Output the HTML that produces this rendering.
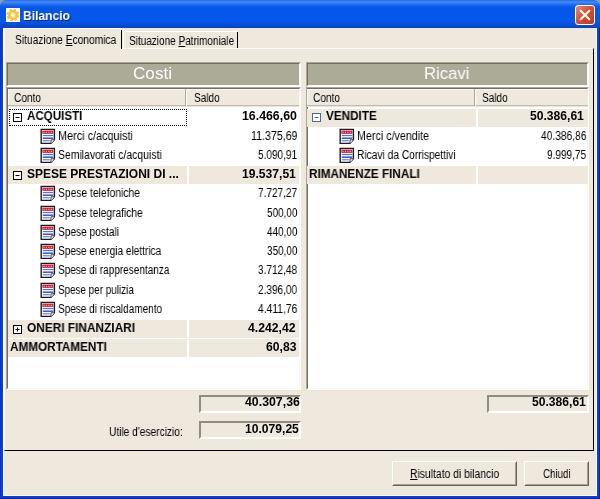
<!DOCTYPE html>
<html><head><meta charset="utf-8"><title>Bilancio</title>
<style>
html,body{margin:0;padding:0;}
body{width:600px;height:499px;overflow:hidden;position:relative;background:#eee8dd;font-family:"Liberation Sans",sans-serif;font-size:12px;color:#000;}
div,svg{position:absolute;box-sizing:border-box;}
i{display:block;}
.ic{position:absolute;}
#corner{left:0;top:0;width:600px;height:10px;background:#9a9a9a;}
#frame{left:0;top:8px;width:600px;height:491px;background:#0a40d8;border:1px solid;border-color:#0a40d8 #0626a4 #0620a0 #0a34c4;}
#tb{left:0;top:0;width:600px;height:28px;background:linear-gradient(to bottom,#2a68dc 0px,#3f8ffb 2px,#2672f2 4px,#0c5cec 6.5px,#0556e8 9px,#0558ea 21px,#0650de 24px,#0642c4 28px);border-radius:6px 6px 0 0;}
#client{left:3px;top:28px;width:594px;height:468px;background:#eee8dd;border:1px solid #fff;border-top:none;}
#ico{left:6px;top:8px;width:14px;height:14px;background:#fff;}
#close{left:575px;top:5px;width:20px;height:20px;border:1px solid #fff;border-radius:3px;background:linear-gradient(135deg,#e98d73 0%,#d8502f 45%,#c03a1c 100%);}
.t{white-space:nowrap;line-height:14px;transform-origin:0 0;will-change:transform;}
.focus{border:1px dotted #000;}
.sunk{border:1px solid;border-color:#aca899 #fff #fff #aca899;}
.sunk>i{position:absolute;left:0;top:0;right:0;bottom:0;border:1px solid;border-color:#716f64 #fbfaf6 #fbfaf6 #716f64;}
.sunk2{border:2px solid;border-color:#8f8d82 #fff #fff #8f8d82;}
.hdr{background:#acab98;}
.btn{background:#eee8dd;border:1px solid;border-color:#fff #69655c #69655c #fff;}
.btn>i{position:absolute;left:0;top:0;right:0;bottom:0;border:1px solid;border-color:#eee8dd #a39e90 #a39e90 #eee8dd;}
u{text-decoration:underline;}
</style></head><body>

<div id="corner"></div>
<div id="frame"></div>
<div id="client"></div>
<div id="tb"></div>
<div id="ico"><svg style="left:0;top:0" width="14" height="14" viewBox="0 0 14 14"><circle cx="7" cy="7" r="4.9" fill="#f0c43a"/><circle cx="7" cy="7" r="5.6" fill="none" stroke="#f0c43a" stroke-width="1.6" stroke-dasharray="2.6 1.8"/><circle cx="7" cy="7" r="3.2" fill="#f7d765"/><circle cx="7" cy="7" r="1.7" fill="#fffbe6"/></svg></div>
<div class="t" style="left:23.40px;top:8.80px;font-size:13px;transform:scaleX(0.9300);font-weight:bold;color:#fff;text-shadow:1px 1px 0 #0a246a;">Bilancio</div>
<div id="close"><svg style="left:0;top:0" width="18" height="18" viewBox="0 0 18 18"><path d="M4.7 4.7L13.3 13.3M13.3 4.7L4.7 13.3" stroke="#fff" stroke-width="2" stroke-linecap="round"/></svg></div>

<!-- tab control -->
<div style="left:4px;top:48px;width:589.5px;height:403px;border:1px solid;border-color:#fff #000 #000 #fff;"></div>
<div style="left:4px;top:28px;width:118px;height:22px;background:#eee8dd;border-left:1px solid #fff;border-top:1px solid #fff;"></div>
<div style="left:121px;top:30px;width:1px;height:19px;background:#000;"></div>
<div class="t" style="left:14.50px;top:33.00px;font-size:12px;transform:scaleX(0.8529);">Situazione <u>E</u>conomica</div>
<div style="left:123px;top:31px;width:115px;height:17px;border-left:1px solid #fff;border-top:1px solid #fff;"></div>
<div style="left:237px;top:32px;width:1px;height:16px;background:#000;"></div>
<div class="t" style="left:129.00px;top:33.60px;font-size:12px;transform:scaleX(0.8333);">Situazione <u>P</u>atrimoniale</div>

<!-- header panels -->
<div class="sunk hdr" style="left:6px;top:62px;width:295px;height:25px;"><i></i></div>
<div class="sunk hdr" style="left:306px;top:62px;width:283px;height:25px;"><i></i></div>
<div class="t" style="left:133.20px;top:67.00px;font-size:17px;transform:scaleX(1.0079);color:#fff;">Costi</div>
<div class="t" style="left:423.82px;top:67.00px;font-size:17px;transform:scaleX(0.9822);color:#fff;">Ricavi</div>

<!-- trees -->
<div class="sunk" style="left:6px;top:87px;width:295px;height:303px;background:#fff;"><i></i></div>
<div class="sunk" style="left:305.5px;top:87px;width:283.5px;height:303px;background:#fff;"><i></i></div>
<!-- column headers -->
<div style="left:8px;top:89px;width:291px;height:16px;background:#eee8dd;border-top:1px solid #faf8f3;border-left:1px solid #faf8f3;"></div><div style="left:8px;top:105px;width:291px;height:1px;background:#c0bbad;"></div><div style="left:8px;top:106px;width:291px;height:1px;background:#e6e5e0;"></div>
<div style="left:185px;top:89px;width:2px;height:17.3px;border-left:1px solid #aca899;border-right:1px solid #fff;"></div>
<div class="t" style="left:14.00px;top:90.80px;font-size:12px;transform:scaleX(0.8438);">Conto</div>
<div class="t" style="left:193.60px;top:90.80px;font-size:12px;transform:scaleX(0.8387);">Saldo</div>
<div style="left:307px;top:89px;width:280.6px;height:16px;background:#eee8dd;border-top:1px solid #faf8f3;border-left:1px solid #faf8f3;"></div><div style="left:307px;top:105px;width:280.6px;height:1px;background:#c0bbad;"></div><div style="left:307px;top:106px;width:280.6px;height:1px;background:#e6e5e0;"></div>
<div style="left:474px;top:89px;width:2px;height:17.3px;border-left:1px solid #aca899;border-right:1px solid #fff;"></div>
<div class="t" style="left:312.60px;top:90.80px;font-size:12px;transform:scaleX(0.8438);">Conto</div>
<div class="t" style="left:482.40px;top:90.80px;font-size:12px;transform:scaleX(0.8387);">Saldo</div>

<svg class="ic" style="left:13.20px;top:113.45px" width="9" height="9" viewBox="0 0 9 9">
<rect x="0.5" y="0.5" width="8" height="8" fill="#fff" stroke="#000" stroke-width="1"/>
<path d="M2.5 4.5h4" stroke="#000" stroke-width="1"/></svg>
<div class="t" style="left:27.20px;top:109.25px;font-size:12px;transform:scaleX(0.9649);font-weight:bold;">ACQUISTI</div>
<div class="t" style="left:241.72px;top:109.25px;font-size:12px;transform:scaleX(1.0279);font-weight:bold;">16.466,60</div>
<div class="focus" style="left:8.5px;top:109.05px;width:178.5px;height:17.3px"></div>
<svg class="ic" style="left:40.30px;top:127.77px" width="16" height="17" viewBox="0 0 16 17">
<path d="M1.2 1.4 H14.4 V11.8 L11 15.4 H1.2 Z" fill="#fff" stroke="#1c1c1c" stroke-width="1.4"/>
<path d="M11 15.4 V11.8 H14.4" fill="#fff" stroke="#333" stroke-width="0.9"/>
<rect x="2.4" y="2.6" width="10.8" height="3.2" fill="#c8102e"/>
<path d="M3.4 4.2h1.3M5.8 4.2h1.3M8.2 4.2h1.3M10.6 4.2h1.6" stroke="#f6d4da" stroke-width="1.1"/>
<path d="M2.8 7.6h10.4M2.8 12.8h7" stroke="#4660ea" stroke-width="1"/><path d="M2.8 10.2h10.4" stroke="#3552e6" stroke-width="1.5"/>
</svg>
<div class="t" style="left:57.50px;top:128.77px;font-size:12px;transform:scaleX(0.9049);">Merci c/acquisti</div>
<div class="t" style="left:251.39px;top:128.77px;font-size:12px;transform:scaleX(0.8849);">11.375,69</div>
<svg class="ic" style="left:40.30px;top:146.99px" width="16" height="17" viewBox="0 0 16 17">
<path d="M1.2 1.4 H14.4 V11.8 L11 15.4 H1.2 Z" fill="#fff" stroke="#1c1c1c" stroke-width="1.4"/>
<path d="M11 15.4 V11.8 H14.4" fill="#fff" stroke="#333" stroke-width="0.9"/>
<rect x="2.4" y="2.6" width="10.8" height="3.2" fill="#c8102e"/>
<path d="M3.4 4.2h1.3M5.8 4.2h1.3M8.2 4.2h1.3M10.6 4.2h1.6" stroke="#f6d4da" stroke-width="1.1"/>
<path d="M2.8 7.6h10.4M2.8 12.8h7" stroke="#4660ea" stroke-width="1"/><path d="M2.8 10.2h10.4" stroke="#3552e6" stroke-width="1.5"/>
</svg>
<div class="t" style="left:58.40px;top:147.99px;font-size:12px;transform:scaleX(0.8689);">Semilavorati c/acquisti</div>
<div class="t" style="left:258.04px;top:147.99px;font-size:12px;transform:scaleX(0.8375);">5.090,91</div>
<div style="left:8px;top:166.41px;width:179.0px;height:18.0px;background:#eee8dd"></div>
<div style="left:188.5px;top:166.41px;width:110.39999999999998px;height:18.0px;background:#eee8dd"></div>
<svg class="ic" style="left:13.20px;top:171.11px" width="9" height="9" viewBox="0 0 9 9">
<rect x="0.5" y="0.5" width="8" height="8" fill="#fff" stroke="#000" stroke-width="1"/>
<path d="M2.5 4.5h4" stroke="#000" stroke-width="1"/></svg>
<div class="t" style="left:27.20px;top:166.91px;font-size:12px;transform:scaleX(1.0000);font-weight:bold;">SPESE PRESTAZIONI DI ...</div>
<div class="t" style="left:241.72px;top:166.91px;font-size:12px;transform:scaleX(1.0088);font-weight:bold;">19.537,51</div>
<svg class="ic" style="left:40.30px;top:185.43px" width="16" height="17" viewBox="0 0 16 17">
<path d="M1.2 1.4 H14.4 V11.8 L11 15.4 H1.2 Z" fill="#fff" stroke="#1c1c1c" stroke-width="1.4"/>
<path d="M11 15.4 V11.8 H14.4" fill="#fff" stroke="#333" stroke-width="0.9"/>
<rect x="2.4" y="2.6" width="10.8" height="3.2" fill="#c8102e"/>
<path d="M3.4 4.2h1.3M5.8 4.2h1.3M8.2 4.2h1.3M10.6 4.2h1.6" stroke="#f6d4da" stroke-width="1.1"/>
<path d="M2.8 7.6h10.4M2.8 12.8h7" stroke="#4660ea" stroke-width="1"/><path d="M2.8 10.2h10.4" stroke="#3552e6" stroke-width="1.5"/>
</svg>
<div class="t" style="left:58.40px;top:186.43px;font-size:12px;transform:scaleX(0.8589);">Spese telefoniche</div>
<div class="t" style="left:258.04px;top:186.43px;font-size:12px;transform:scaleX(0.8375);">7.727,27</div>
<svg class="ic" style="left:40.30px;top:204.65px" width="16" height="17" viewBox="0 0 16 17">
<path d="M1.2 1.4 H14.4 V11.8 L11 15.4 H1.2 Z" fill="#fff" stroke="#1c1c1c" stroke-width="1.4"/>
<path d="M11 15.4 V11.8 H14.4" fill="#fff" stroke="#333" stroke-width="0.9"/>
<rect x="2.4" y="2.6" width="10.8" height="3.2" fill="#c8102e"/>
<path d="M3.4 4.2h1.3M5.8 4.2h1.3M8.2 4.2h1.3M10.6 4.2h1.6" stroke="#f6d4da" stroke-width="1.1"/>
<path d="M2.8 7.6h10.4M2.8 12.8h7" stroke="#4660ea" stroke-width="1"/><path d="M2.8 10.2h10.4" stroke="#3552e6" stroke-width="1.5"/>
</svg>
<div class="t" style="left:58.40px;top:205.65px;font-size:12px;transform:scaleX(0.8525);">Spese telegrafiche</div>
<div class="t" style="left:266.69px;top:205.65px;font-size:12px;transform:scaleX(0.8301);">500,00</div>
<svg class="ic" style="left:40.30px;top:223.87px" width="16" height="17" viewBox="0 0 16 17">
<path d="M1.2 1.4 H14.4 V11.8 L11 15.4 H1.2 Z" fill="#fff" stroke="#1c1c1c" stroke-width="1.4"/>
<path d="M11 15.4 V11.8 H14.4" fill="#fff" stroke="#333" stroke-width="0.9"/>
<rect x="2.4" y="2.6" width="10.8" height="3.2" fill="#c8102e"/>
<path d="M3.4 4.2h1.3M5.8 4.2h1.3M8.2 4.2h1.3M10.6 4.2h1.6" stroke="#f6d4da" stroke-width="1.1"/>
<path d="M2.8 7.6h10.4M2.8 12.8h7" stroke="#4660ea" stroke-width="1"/><path d="M2.8 10.2h10.4" stroke="#3552e6" stroke-width="1.5"/>
</svg>
<div class="t" style="left:58.40px;top:224.87px;font-size:12px;transform:scaleX(0.8458);">Spese postali</div>
<div class="t" style="left:266.69px;top:224.87px;font-size:12px;transform:scaleX(0.8301);">440,00</div>
<svg class="ic" style="left:40.30px;top:243.09px" width="16" height="17" viewBox="0 0 16 17">
<path d="M1.2 1.4 H14.4 V11.8 L11 15.4 H1.2 Z" fill="#fff" stroke="#1c1c1c" stroke-width="1.4"/>
<path d="M11 15.4 V11.8 H14.4" fill="#fff" stroke="#333" stroke-width="0.9"/>
<rect x="2.4" y="2.6" width="10.8" height="3.2" fill="#c8102e"/>
<path d="M3.4 4.2h1.3M5.8 4.2h1.3M8.2 4.2h1.3M10.6 4.2h1.6" stroke="#f6d4da" stroke-width="1.1"/>
<path d="M2.8 7.6h10.4M2.8 12.8h7" stroke="#4660ea" stroke-width="1"/><path d="M2.8 10.2h10.4" stroke="#3552e6" stroke-width="1.5"/>
</svg>
<div class="t" style="left:58.40px;top:244.09px;font-size:12px;transform:scaleX(0.8407);">Spese energia elettrica</div>
<div class="t" style="left:266.69px;top:244.09px;font-size:12px;transform:scaleX(0.8301);">350,00</div>
<svg class="ic" style="left:40.30px;top:262.31px" width="16" height="17" viewBox="0 0 16 17">
<path d="M1.2 1.4 H14.4 V11.8 L11 15.4 H1.2 Z" fill="#fff" stroke="#1c1c1c" stroke-width="1.4"/>
<path d="M11 15.4 V11.8 H14.4" fill="#fff" stroke="#333" stroke-width="0.9"/>
<rect x="2.4" y="2.6" width="10.8" height="3.2" fill="#c8102e"/>
<path d="M3.4 4.2h1.3M5.8 4.2h1.3M8.2 4.2h1.3M10.6 4.2h1.6" stroke="#f6d4da" stroke-width="1.1"/>
<path d="M2.8 7.6h10.4M2.8 12.8h7" stroke="#4660ea" stroke-width="1"/><path d="M2.8 10.2h10.4" stroke="#3552e6" stroke-width="1.5"/>
</svg>
<div class="t" style="left:58.40px;top:263.31px;font-size:12px;transform:scaleX(0.8351);">Spese di rappresentanza</div>
<div class="t" style="left:258.04px;top:263.31px;font-size:12px;transform:scaleX(0.8375);">3.712,48</div>
<svg class="ic" style="left:40.30px;top:281.53px" width="16" height="17" viewBox="0 0 16 17">
<path d="M1.2 1.4 H14.4 V11.8 L11 15.4 H1.2 Z" fill="#fff" stroke="#1c1c1c" stroke-width="1.4"/>
<path d="M11 15.4 V11.8 H14.4" fill="#fff" stroke="#333" stroke-width="0.9"/>
<rect x="2.4" y="2.6" width="10.8" height="3.2" fill="#c8102e"/>
<path d="M3.4 4.2h1.3M5.8 4.2h1.3M8.2 4.2h1.3M10.6 4.2h1.6" stroke="#f6d4da" stroke-width="1.1"/>
<path d="M2.8 7.6h10.4M2.8 12.8h7" stroke="#4660ea" stroke-width="1"/><path d="M2.8 10.2h10.4" stroke="#3552e6" stroke-width="1.5"/>
</svg>
<div class="t" style="left:58.40px;top:282.53px;font-size:12px;transform:scaleX(0.8226);">Spese per pulizia</div>
<div class="t" style="left:258.04px;top:282.53px;font-size:12px;transform:scaleX(0.8375);">2.396,00</div>
<svg class="ic" style="left:40.30px;top:300.75px" width="16" height="17" viewBox="0 0 16 17">
<path d="M1.2 1.4 H14.4 V11.8 L11 15.4 H1.2 Z" fill="#fff" stroke="#1c1c1c" stroke-width="1.4"/>
<path d="M11 15.4 V11.8 H14.4" fill="#fff" stroke="#333" stroke-width="0.9"/>
<rect x="2.4" y="2.6" width="10.8" height="3.2" fill="#c8102e"/>
<path d="M3.4 4.2h1.3M5.8 4.2h1.3M8.2 4.2h1.3M10.6 4.2h1.6" stroke="#f6d4da" stroke-width="1.1"/>
<path d="M2.8 7.6h10.4M2.8 12.8h7" stroke="#4660ea" stroke-width="1"/><path d="M2.8 10.2h10.4" stroke="#3552e6" stroke-width="1.5"/>
</svg>
<div class="t" style="left:58.40px;top:301.75px;font-size:12px;transform:scaleX(0.8344);">Spese di riscaldamento</div>
<div class="t" style="left:258.04px;top:301.75px;font-size:12px;transform:scaleX(0.8557);">4.411,76</div>
<div style="left:8px;top:320.17px;width:179.0px;height:18.0px;background:#eee8dd"></div>
<div style="left:188.5px;top:320.17px;width:110.39999999999998px;height:18.0px;background:#eee8dd"></div>
<svg class="ic" style="left:13.20px;top:324.87px" width="9" height="9" viewBox="0 0 9 9">
<rect x="0.5" y="0.5" width="8" height="8" fill="#fff" stroke="#000" stroke-width="1"/>
<path d="M2.5 4.5h4" stroke="#000" stroke-width="1"/><path d="M4.5 2.5v4" stroke="#000" stroke-width="1"/></svg>
<div class="t" style="left:27.20px;top:320.67px;font-size:12px;transform:scaleX(0.9881);font-weight:bold;">ONERI FINANZIARI</div>
<div class="t" style="left:248.45px;top:320.67px;font-size:12px;transform:scaleX(1.0160);font-weight:bold;">4.242,42</div>
<div style="left:8px;top:339.39px;width:179.0px;height:18.0px;background:#eee8dd"></div>
<div style="left:188.5px;top:339.39px;width:110.39999999999998px;height:18.0px;background:#eee8dd"></div>
<div class="t" style="left:10.00px;top:339.89px;font-size:12px;transform:scaleX(0.9768);font-weight:bold;">AMMORTAMENTI</div>
<div class="t" style="left:265.75px;top:339.89px;font-size:12px;transform:scaleX(1.0151);font-weight:bold;">60,83</div>
<div style="left:307px;top:108.75px;width:169.0px;height:18.0px;background:#eee8dd"></div>
<div style="left:477.5px;top:108.75px;width:110.10000000000002px;height:18.0px;background:#eee8dd"></div>
<svg class="ic" style="left:312.20px;top:113.45px" width="9" height="9" viewBox="0 0 9 9">
<rect x="0.5" y="0.5" width="8" height="8" fill="#fff" stroke="#4a6a9c" stroke-width="1"/>
<path d="M2.5 4.5h4" stroke="#4a6a9c" stroke-width="1"/></svg>
<div class="t" style="left:326.20px;top:109.25px;font-size:12px;transform:scaleX(0.9750);font-weight:bold;">VENDITE</div>
<div class="t" style="left:530.42px;top:109.25px;font-size:12px;transform:scaleX(1.0088);font-weight:bold;">50.386,61</div>
<svg class="ic" style="left:339.30px;top:127.77px" width="16" height="17" viewBox="0 0 16 17">
<path d="M1.2 1.4 H14.4 V11.8 L11 15.4 H1.2 Z" fill="#fff" stroke="#1c1c1c" stroke-width="1.4"/>
<path d="M11 15.4 V11.8 H14.4" fill="#fff" stroke="#333" stroke-width="0.9"/>
<rect x="2.4" y="2.6" width="10.8" height="3.2" fill="#c8102e"/>
<path d="M3.4 4.2h1.3M5.8 4.2h1.3M8.2 4.2h1.3M10.6 4.2h1.6" stroke="#f6d4da" stroke-width="1.1"/>
<path d="M2.8 7.6h10.4M2.8 12.8h7" stroke="#4660ea" stroke-width="1"/><path d="M2.8 10.2h10.4" stroke="#3552e6" stroke-width="1.5"/>
</svg>
<div class="t" style="left:356.51px;top:128.77px;font-size:12px;transform:scaleX(0.8925);">Merci c/vendite</div>
<div class="t" style="left:540.97px;top:128.77px;font-size:12px;transform:scaleX(0.8515);">40.386,86</div>
<svg class="ic" style="left:339.30px;top:146.99px" width="16" height="17" viewBox="0 0 16 17">
<path d="M1.2 1.4 H14.4 V11.8 L11 15.4 H1.2 Z" fill="#fff" stroke="#1c1c1c" stroke-width="1.4"/>
<path d="M11 15.4 V11.8 H14.4" fill="#fff" stroke="#333" stroke-width="0.9"/>
<rect x="2.4" y="2.6" width="10.8" height="3.2" fill="#c8102e"/>
<path d="M3.4 4.2h1.3M5.8 4.2h1.3M8.2 4.2h1.3M10.6 4.2h1.6" stroke="#f6d4da" stroke-width="1.1"/>
<path d="M2.8 7.6h10.4M2.8 12.8h7" stroke="#4660ea" stroke-width="1"/><path d="M2.8 10.2h10.4" stroke="#3552e6" stroke-width="1.5"/>
</svg>
<div class="t" style="left:356.55px;top:147.99px;font-size:12px;transform:scaleX(0.8504);">Ricavi da Corrispettivi</div>
<div class="t" style="left:546.74px;top:147.99px;font-size:12px;transform:scaleX(0.8375);">9.999,75</div>
<div style="left:307px;top:166.41px;width:169.0px;height:18.0px;background:#eee8dd"></div>
<div style="left:477.5px;top:166.41px;width:110.10000000000002px;height:18.0px;background:#eee8dd"></div>
<div class="t" style="left:309.00px;top:166.91px;font-size:12px;transform:scaleX(0.9770);font-weight:bold;">RIMANENZE FINALI</div>

<!-- totals -->
<div class="sunk2" style="left:199px;top:394.5px;width:102.3px;height:18.7px;"></div>
<div class="t" style="left:244.82px;top:395.30px;font-size:12px;transform:scaleX(1.0279);font-weight:bold;">40.307,36</div>
<div class="sunk2" style="left:199px;top:420.5px;width:102.3px;height:18.7px;"></div>
<div class="t" style="left:244.82px;top:421.50px;font-size:12px;transform:scaleX(1.0088);font-weight:bold;">10.079,25</div>
<div class="t" style="left:108.95px;top:425.00px;font-size:12px;transform:scaleX(0.8471);">Utile d'esercizio:</div>
<div class="sunk2" style="left:486.5px;top:394.5px;width:102.3px;height:18.7px;"></div>
<div class="t" style="left:531.52px;top:395.30px;font-size:12px;transform:scaleX(1.0088);font-weight:bold;">50.386,61</div>

<!-- buttons -->
<div class="btn" style="left:392px;top:461px;width:124.5px;height:25px;"><i></i></div>
<div class="t" style="left:409.54px;top:466.80px;font-size:12px;transform:scaleX(0.8627);"><u>R</u>isultato di bilancio</div>
<div class="btn" style="left:523.5px;top:461px;width:65.5px;height:25px;"><i></i></div>
<div class="t" style="left:543.20px;top:466.80px;font-size:12px;transform:scaleX(0.8088);">Chiudi</div>

</body></html>
